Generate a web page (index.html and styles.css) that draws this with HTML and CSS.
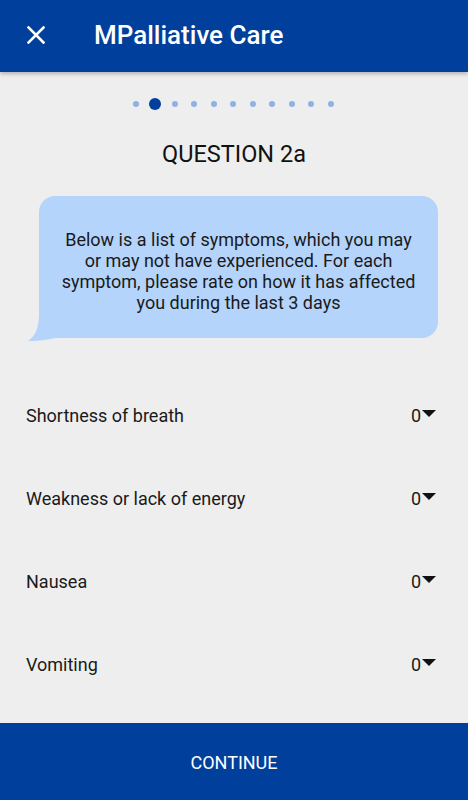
FILE: index.html
```html
<!DOCTYPE html>
<html lang="en">
<head>
    <meta charset="UTF-8">
    <meta name="viewport" content="width=device-width, initial-scale=1.0">
    <title>MPalliative Care</title>
    <link rel="stylesheet" href="styles.css">
</head>
<body>
    <div class="app">
        <header class="toolbar">
            <svg class="close-icon" width="18" height="18" viewBox="0 0 18 18">
                <path d="M1.5 1.5 L16.5 16.5 M16.5 1.5 L1.5 16.5" stroke="#fff" stroke-width="2.6" stroke-linecap="square"/>
            </svg>
            <h1 class="toolbar-title">MPalliative Care</h1>
        </header>

        <main class="content">
            <div class="pager">
                <span class="dot"></span>
                <span class="dot active"></span>
                <span class="dot"></span>
                <span class="dot"></span>
                <span class="dot"></span>
                <span class="dot"></span>
                <span class="dot"></span>
                <span class="dot"></span>
                <span class="dot"></span>
                <span class="dot"></span>
                <span class="dot"></span>
            </div>

            <h2 class="question-title">QUESTION 2a</h2>

            <div class="bubble">
                <p>Below is a list of symptoms, which you may or may not have experienced. For each symptom, please rate on how it has affected you during the last 3 days</p>
                <svg class="bubble-tail" width="30" height="30" viewBox="0 0 30 30">
                    <path d="M11 2 Q11 22 0 29 Q12 29.5 28 26 L11 26 Z" fill="#b4d4fb"/>
                </svg>
            </div>

            <ul class="symptoms">
                <li class="symptom"><span>Shortness of breath</span><span class="select">0<i class="caret"></i></span></li>
                <li class="symptom"><span>Weakness or lack of energy</span><span class="select">0<i class="caret"></i></span></li>
                <li class="symptom"><span>Nausea</span><span class="select">0<i class="caret"></i></span></li>
                <li class="symptom"><span>Vomiting</span><span class="select">0<i class="caret"></i></span></li>
            </ul>
        </main>

        <footer class="continue-bar">CONTINUE</footer>
    </div>
</body>
</html>
```

FILE: styles.css
```css
body {
    margin: 0;
    padding: 0;
    font-family: Roboto, "Noto Sans", sans-serif;
    background-color: #eeeeee;
    color: #1a1a1a;
}

.app {
    display: flex;
    flex-direction: column;
    height: 800px;
}

.toolbar {
    height: 72px;
    background-color: #003f9b;
    display: flex;
    align-items: center;
    padding-left: 27px;
    box-shadow: 0 2px 4px rgba(0, 0, 0, 0.25);
    position: relative;
    z-index: 1;
}

.close-icon {
    display: block;
    margin-top: -2px;
}

.toolbar-title {
    margin: -3px 0 0 49px;
    color: #fff;
    font-size: 26px;
    font-weight: 500;
}

.content {
    flex: 1;
    display: flex;
    flex-direction: column;
}

.pager {
    display: flex;
    justify-content: center;
    align-items: center;
    gap: 13.5px;
    height: 12px;
    margin-top: 26px;
    padding-right: 2px;
}

.dot {
    width: 6px;
    height: 6px;
    border-radius: 50%;
    background-color: #8eb2e6;
}

.dot.active {
    width: 12px;
    height: 12px;
    margin: 0 -3px;
    background-color: #003f9b;
}

.question-title {
    margin: 29px 0 0;
    font-size: 23.5px;
    line-height: 30px;
    font-weight: 400;
    text-align: center;
    color: #111;
}

.bubble {
    position: relative;
    margin: 27px 30px 0 39px;
    height: 142px;
    background-color: #b4d4fb;
    border-radius: 16px;
    border-bottom-left-radius: 0;
    display: flex;
    align-items: center;
    justify-content: center;
}

.bubble p {
    margin: 8px 16px 0;
    font-size: 18px;
    line-height: 21px;
    text-align: center;
    color: #1a1a1a;
}

.bubble-tail {
    position: absolute;
    left: -11px;
    bottom: -4px;
}

.symptoms {
    list-style: none;
    margin: 36px 0 0;
    padding: 0;
}

.symptom {
    height: 83px;
    display: flex;
    align-items: center;
    justify-content: space-between;
    padding: 0 32px 0 26px;
    font-size: 18px;
    color: #1a1a1a;
}

.select {
    display: flex;
    align-items: center;
    gap: 1px;
}

.caret {
    width: 0;
    height: 0;
    border-left: 7px solid transparent;
    border-right: 7px solid transparent;
    border-top: 7px solid #111;
    margin-top: -4px;
}

.continue-bar {
    height: 77px;
    background-color: #003f9b;
    color: #fff;
    font-size: 18px;
    display: flex;
    align-items: center;
    justify-content: center;
    padding-top: 2px;
    box-sizing: border-box;
}
```
